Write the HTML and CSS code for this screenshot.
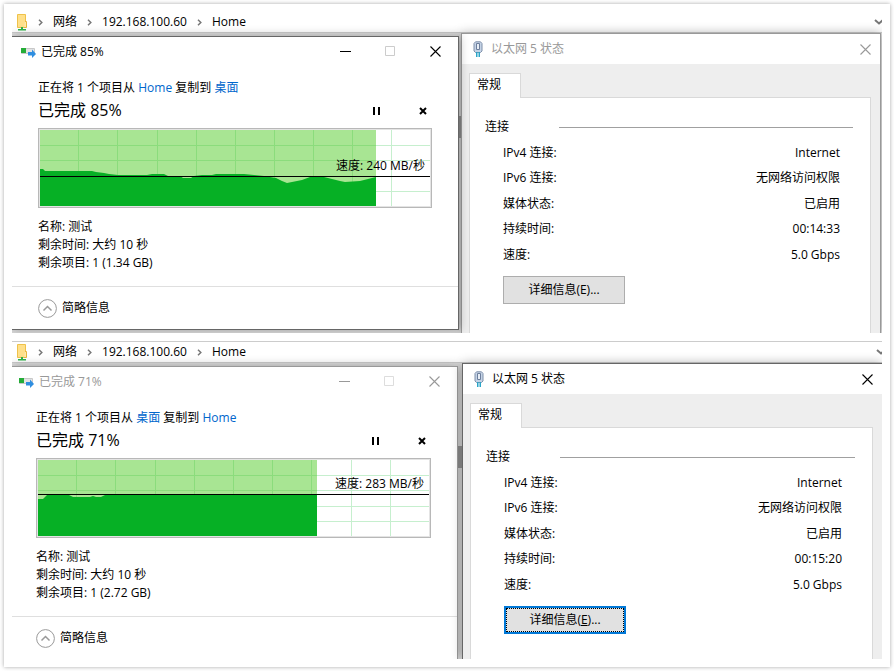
FILE: index.html
```html
<!DOCTYPE html>
<html lang="zh-CN">
<head>
  <meta charset="UTF-8">
  <title>文件复制</title>
  <link rel="stylesheet" href="styles.css">
</head>
<body>
  <svg class="sprite" width="0" height="0" aria-hidden="true">
    <symbol id="folder" viewBox="0 0 12 18">
      <path d="M1.500 1.500h8v13h-8z" fill="#ffe08a" stroke="#efc24a"/>
      <path d="M9 8.500h1.500v6H8" fill="#ffe9a8" stroke="#e6b53c"/>
      <path d="M5 14h2v2h3v1.500H2V16h3z" fill="#2fb34a"/>
    </symbol>
    <symbol id="chevron" viewBox="0 0 5 7">
      <path d="M1 .8 3.800 3.500 1 6.200" fill="none" stroke="#777" stroke-width="1.500"/>
    </symbol>
    <symbol id="down" viewBox="0 0 10 6">
      <path d="M1 1l4 3.500L9 1" fill="none" stroke="#777" stroke-width="2"/>
    </symbol>
    <symbol id="copy" viewBox="0 0 15 12">
      <path d="M.5 2.500h13v5H.5z" fill="#e4e4e4" stroke="#c8c8c8"/>
      <path d="M0 2h5v5H0z" fill="#25ad38"/>
      <path d="M7 6h4V3.500L15 8l-4 4V9.500H7z" fill="#2f8ee0"/>
    </symbol>
    <symbol id="plug" viewBox="0 0 10 16">
      <path d="M2.500 .8h5L9 2.500V10L7.500 11.500h-5L1 10V2.500z" fill="#c5d3e6" stroke="#7f90aa"/>
      <path d="M3.500 2.500h3v6h-3z" fill="#e8eef6" stroke="#6d7f9c"/>
      <path d="M3 11h1.500v5H3zM5.500 11H7v5H5.500z" fill="#2ba5c8"/>
    </symbol>
    <symbol id="min" viewBox="0 0 11 11"><path d="M0 5.500h11" stroke="currentColor"/></symbol>
    <symbol id="max" viewBox="0 0 11 11"><path d="M.5 .5h9v9h-9z" fill="none" stroke="currentColor"/></symbol>
    <symbol id="close" viewBox="0 0 11 11"><path d="M.5 .5l10 10M10.500 .5l-10 10" stroke="currentColor" stroke-width="1.100"/></symbol>
    <symbol id="pause" viewBox="0 0 8 8"><path d="M0 0h2v8H0zM5 0h2v8H5z"/></symbol>
    <symbol id="cancel" viewBox="0 0 8 8"><path d="M1 1l6 6M7 1L1 7" stroke="#000" stroke-width="2"/></symbol>
    <symbol id="less" viewBox="0 0 19 19">
      <circle cx="9.500" cy="9.500" r="8.900" fill="none" stroke="#999"/>
      <path d="M5.500 11.500l4-4 4 4" fill="none" stroke="#999" stroke-width="1.500"/>
    </symbol>
  </svg>

  <main class="page">
    <section class="shot">
      <nav class="address">
        <svg class="folder"><use href="#folder"/></svg>
        <svg class="chevron"><use href="#chevron"/></svg>
        <a href="#">网络</a>
        <svg class="chevron"><use href="#chevron"/></svg>
        <a href="#">192.168.100.60</a>
        <svg class="chevron"><use href="#chevron"/></svg>
        <a href="#">Home</a>
        <svg class="down"><use href="#down"/></svg>
      </nav>
      <div class="desk desk-copy">
        <div class="window copy active">
          <header class="titlebar">
            <svg class="copy-icon"><use href="#copy"/></svg>
            <span class="title">已完成 85%</span>
            <button type="button" class="caption" aria-label="最小化"><svg><use href="#min"/></svg></button>
            <button type="button" class="caption" aria-label="最大化" disabled><svg><use href="#max"/></svg></button>
            <button type="button" class="caption" aria-label="关闭"><svg><use href="#close"/></svg></button>
          </header>
          <div class="body">
            <p class="route">正在将 1 个项目从 <a href="#">Home</a> 复制到 <a href="#">桌面</a></p>
            <div class="progress">
              <h2>已完成 85%</h2>
              <button type="button" class="tool" aria-label="暂停"><svg><use href="#pause"/></svg></button>
              <button type="button" class="tool" aria-label="取消"><svg><use href="#cancel"/></svg></button>
            </div>
            <div class="chart">
              <svg viewBox="0 0 390 76" preserveAspectRatio="none">
                <path class="grid" d="M38.500 0v76M77.500 0v76M117.500 0v76M156.500 0v76M195.500 0v76M234.500 0v76M273.500 0v76M312.500 0v76M351.500 0v76M0 15.500h390M0 30.500h390M0 61.500h390"/>
                <path class="done" d="M0 0h336v76H0z"/>
                <path class="grid-done" d="M38.500 0v76M77.500 0v76M117.500 0v76M156.500 0v76M195.500 0v76M234.500 0v76M273.500 0v76M312.500 0v76M0 15.500h336M0 30.500h336"/>
                <path class="speed" d="M0 76V39h3l2 2h47l4 1 8 1 5 1 9 1h29l5-1h12l4 2h12l3 2h8l3-2 8-1h10l4-1h28l10 1 10 1 12 2 6 3 5 2 5-1 10-2 8-3 7-1 7 1 8 2 8 2 5 1 15-1 8-2 8-2v30z"/>
                <path class="level" d="M0 46.500h390"/>
              </svg>
              <span class="rate rate-low">速度: 240 MB/秒</span>
            </div>
            <ul class="info">
              <li>名称: 测试</li>
              <li>剩余时间: 大约 10 秒</li>
              <li>剩余项目: 1 (1.34 GB)</li>
            </ul>
          </div>
          <footer>
            <button type="button" class="toggle"><svg><use href="#less"/></svg>简略信息</button>
          </footer>
        </div>
        <div class="window status">
          <header class="titlebar">
            <svg class="plug-icon"><use href="#plug"/></svg>
            <span class="title">以太网 5 状态</span>
            <button type="button" class="caption" aria-label="关闭"><svg><use href="#close"/></svg></button>
          </header>
          <div class="sheet">
            <button type="button" class="tab">常规</button>
            <div class="panel">
              <h3>连接</h3>
              <table>
                <tr><th>IPv4 连接:</th><td>Internet</td></tr>
                <tr><th>IPv6 连接:</th><td>无网络访问权限</td></tr>
                <tr><th>媒体状态:</th><td>已启用</td></tr>
                <tr><th>持续时间:</th><td>00:14:33</td></tr>
                <tr><th>速度:</th><td>5.0 Gbps</td></tr>
              </table>
              <button type="button" class="details">详细信息(E)...</button>
            </div>
          </div>
        </div>
      </div>
    </section>

    <section class="shot">
      <nav class="address ruled">
        <svg class="folder"><use href="#folder"/></svg>
        <svg class="chevron"><use href="#chevron"/></svg>
        <a href="#">网络</a>
        <svg class="chevron"><use href="#chevron"/></svg>
        <a href="#">192.168.100.60</a>
        <svg class="chevron"><use href="#chevron"/></svg>
        <a href="#">Home</a>
        <svg class="down"><use href="#down"/></svg>
      </nav>
      <div class="desk desk-status">
        <div class="window copy">
          <header class="titlebar">
            <svg class="copy-icon"><use href="#copy"/></svg>
            <span class="title">已完成 71%</span>
            <button type="button" class="caption" aria-label="最小化"><svg><use href="#min"/></svg></button>
            <button type="button" class="caption" aria-label="最大化" disabled><svg><use href="#max"/></svg></button>
            <button type="button" class="caption" aria-label="关闭"><svg><use href="#close"/></svg></button>
          </header>
          <div class="body">
            <p class="route">正在将 1 个项目从 <a href="#">桌面</a> 复制到 <a href="#">Home</a></p>
            <div class="progress">
              <h2>已完成 71%</h2>
              <button type="button" class="tool" aria-label="暂停"><svg><use href="#pause"/></svg></button>
              <button type="button" class="tool" aria-label="取消"><svg><use href="#cancel"/></svg></button>
            </div>
            <div class="chart">
              <svg viewBox="0 0 391 76" preserveAspectRatio="none">
                <path class="grid" d="M38.500 0v76M77.500 0v76M117.500 0v76M156.500 0v76M195.500 0v76M234.500 0v76M273.500 0v76M313.500 0v76M352.500 0v76M0 15.500h391M0 30.500h391M0 46.500h391M0 61.500h391"/>
                <path class="done" d="M0 0h279v76H0z"/>
                <path class="grid-done" d="M38.500 0v76M77.500 0v76M117.500 0v76M156.500 0v76M195.500 0v76M234.500 0v76M273.500 0v76M0 15.500h279M0 30.500h279"/>
                <path class="speed" d="M0 76V39h5l4-4h22l4 2h17l3-1 3 1h5l4-2h212v41z"/>
                <path class="level" d="M0 34.500h391"/>
              </svg>
              <span class="rate">速度: 283 MB/秒</span>
            </div>
            <ul class="info">
              <li>名称: 测试</li>
              <li>剩余时间: 大约 10 秒</li>
              <li>剩余项目: 1 (2.72 GB)</li>
            </ul>
          </div>
          <footer>
            <button type="button" class="toggle"><svg><use href="#less"/></svg>简略信息</button>
          </footer>
        </div>
        <div class="window status active">
          <header class="titlebar">
            <svg class="plug-icon"><use href="#plug"/></svg>
            <span class="title">以太网 5 状态</span>
            <button type="button" class="caption" aria-label="关闭"><svg><use href="#close"/></svg></button>
          </header>
          <div class="sheet">
            <button type="button" class="tab">常规</button>
            <div class="panel">
              <h3>连接</h3>
              <table>
                <tr><th>IPv4 连接:</th><td>Internet</td></tr>
                <tr><th>IPv6 连接:</th><td>无网络访问权限</td></tr>
                <tr><th>媒体状态:</th><td>已启用</td></tr>
                <tr><th>持续时间:</th><td>00:15:20</td></tr>
                <tr><th>速度:</th><td>5.0 Gbps</td></tr>
              </table>
              <button type="button" class="details focused"><span>详细信息(<u>E</u>)...</span></button>
            </div>
          </div>
        </div>
      </div>
    </section>
  </main>
</body>
</html>
```

FILE: styles.css
```css
* {
  box-sizing: border-box;
}
body {
  margin: 0;
  padding: 4px;
  background-color: #fff;
  color: #000;
  font-family: "Open Sans", "Noto Sans CJK SC", sans-serif;
  font-size: 12px;
  line-height: 18px;
}
h2, h3, p, ul {
  margin: 0;
  padding: 0;
  font-weight: normal;
}
button {
  padding: 0;
  border: none;
  background: none;
  color: inherit;
  font: inherit;
}
svg {
  display: block;
  flex: none;
}
.sprite {
  position: absolute;
}
.page {
  display: flex;
  flex-direction: column;
  gap: 8px;
  padding: 8px;
  background-color: #fff;
  box-shadow: 0 0 4px rgba(0, 0, 0, 0.35);
}
.shot {
  overflow: hidden;
}

/* address bar */
.address {
  display: flex;
  align-items: center;
  height: 21px;
  padding-left: 4px;
  border-bottom: 1px solid #ccc;
}
.address.ruled {
  height: 22px;
  border-top: 1px solid #ccc;
}
.address a {
  color: #000;
  text-decoration: none;
}
.folder {
  width: 12px;
  height: 18px;
}
.chevron {
  width: 5px;
  height: 7px;
  margin: 0 10px;
}
.down {
  width: 10px;
  height: 6px;
  margin-left: auto;
  margin-right: -2px;
}
.ruled .down {
  margin-right: -4px;
}

/* desktop behind the two windows, with a piece of scrollbar in the gap */
.desk {
  display: grid;
  background: linear-gradient(#999, #999) 50% 83px / 20% 22px no-repeat #ddd;
}
.desk-copy {
  grid-template-columns: 447fr 420fr;
  gap: 2px;
  padding-right: 1px;
}
.desk-status {
  grid-template-columns: 446fr 420fr;
  gap: 4px;
}
.window {
  position: relative;
  border-top: 1px solid #999;
  background-color: #fff;
  box-shadow: 0 0 10px rgba(0, 0, 0, 0.3);
}
.window.active {
  z-index: 1;
  border-color: #666;
}
.titlebar {
  display: flex;
  align-items: center;
}
.title {
  flex: 1;
}
.titlebar .title, .caption {
  color: #999;
}
.active .title, .active .caption {
  color: #000;
}
.caption {
  display: flex;
  justify-content: center;
  width: 45px;
}
.caption:disabled {
  color: #ddd;
}
.active .caption:disabled {
  color: #ccc;
}
.caption svg {
  width: 11px;
  height: 11px;
}

/* copy dialog */
.copy {
  align-self: start;
  margin-top: 3px;
  border-right: 1px solid #999;
}
.copy.active {
  border-bottom: 1px solid #666;
}
.copy .titlebar {
  height: 29px;
  padding-left: 7px;
}
.copy.active .titlebar {
  padding-left: 9px;
}
.copy-icon {
  width: 15px;
  height: 12px;
  margin-right: 5px;
}
.body {
  padding: 12px 26px 14px 24px;
}
.active .body {
  padding-left: 26px;
}
.route {
  line-height: 20px;
}
.route a {
  color: #0066cc;
  text-decoration: none;
}
.progress {
  display: flex;
  align-items: center;
  gap: 28px;
  height: 24px;
}
.progress h2 {
  flex: 1;
  font-size: 16px;
  line-height: 24px;
}
.tool {
  display: flex;
  justify-content: center;
  width: 18px;
  padding-top: 2px;
}
.tool svg {
  width: 8px;
  height: 8px;
}
.chart {
  position: relative;
  height: 80px;
  margin-top: 6px;
  padding: 1px;
  border: 1px solid #b8b8b8;
  background-color: #e4e4e4;
}
.chart svg {
  width: 100%;
  height: 76px;
  background-color: #fff;
}
.grid {
  stroke: #c6efce;
}
.done {
  fill: #a8e593;
}
.grid-done {
  stroke: #8bdc7c;
}
.speed {
  fill: #06b025;
}
.level {
  stroke: #000;
}
.rate {
  position: absolute;
  top: 16px;
  right: 6px;
}
.rate-low {
  top: 28px;
}
.info {
  margin-top: 10px;
  list-style: none;
}
footer {
  display: flex;
  align-items: center;
  height: 43px;
  padding-left: 24px;
  border-top: 1px solid #dfdfdf;
}
.active footer {
  padding-left: 26px;
}
.toggle {
  display: flex;
  align-items: center;
  gap: 5px;
}
.toggle svg {
  width: 19px;
  height: 19px;
}

/* adapter status */
.status {
  display: flex;
  flex-direction: column;
  border-left: 1px solid #999;
  border-right: 1px solid #999;
}
.status.active {
  border-right: none;
}
.status .titlebar {
  height: 30px;
  padding-left: 11px;
}
.status .caption {
  width: 30px;
}
.plug-icon {
  width: 10px;
  height: 16px;
  margin-right: 8px;
}
.sheet {
  flex: 1;
  display: flex;
  flex-direction: column;
  padding: 9px 9px 0 7px;
  background-color: #eee;
}
.tab {
  position: relative;
  align-self: flex-start;
  width: 52px;
  height: 25px;
  margin-bottom: -1px;
  padding: 0 7px 2px;
  border: 1px solid #d9d9d9;
  border-bottom: none;
  background-color: #fff;
  text-align: left;
}
.panel {
  flex: 1;
  padding: 19px 17px 24px 15px;
  border: 1px solid #d9d9d9;
  border-bottom: none;
  background-color: #fff;
}
.desk-copy .panel {
  padding-bottom: 29px;
}
.panel h3 {
  display: flex;
  align-items: center;
  gap: 50px;
  font-size: 12px;
  line-height: 20px;
}
.panel h3::after {
  content: "";
  flex: 1;
  border-top: 1px solid #a0a0a0;
}
table {
  width: 100%;
  margin-top: 3px;
  border-collapse: collapse;
}
th, td {
  height: 25px;
  padding: 0;
  font-weight: normal;
}
tr:nth-child(even) td {
  height: 26px;
}
th {
  padding-left: 18px;
  text-align: left;
}
td {
  padding-right: 13px;
  text-align: right;
}
.details {
  width: 122px;
  height: 28px;
  margin: 9px 0 0 18px;
  border: 1px solid #adadad;
  background-color: #e1e1e1;
}
.details.focused {
  border: 2px solid #0078d7;
  outline: 1px dotted #000;
  outline-offset: -3px;
}
```
